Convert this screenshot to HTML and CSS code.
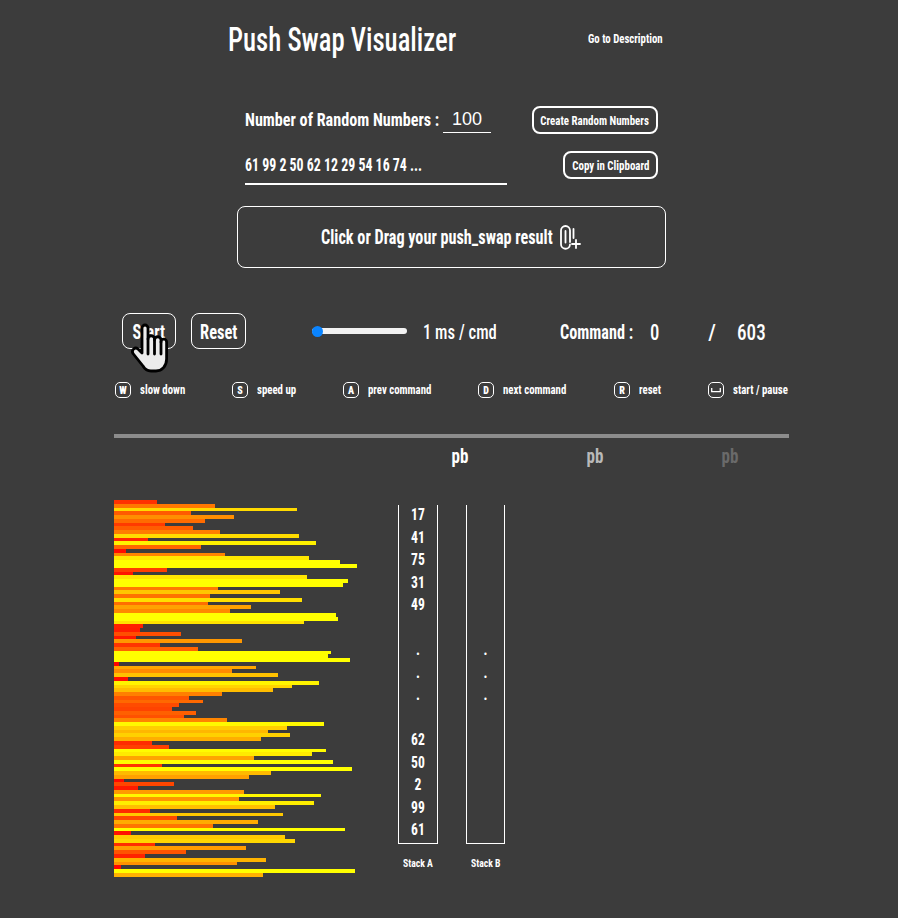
FILE: index.html
```html
<!DOCTYPE html>
<html lang="en">
<head>
    <meta charset="UTF-8">
    <meta name="viewport" content="width=device-width, initial-scale=1.0">
    <title>Push Swap Visualizer</title>
    <link rel="stylesheet" href="styles.css">
</head>
<body>
    <div class="page">
        <header class="top">
            <h1>Push Swap Visualizer</h1>
            <a class="desc-link" href="#description">Go to Description</a>
        </header>

        <section class="inputs">
            <div class="input-row">
                <label class="count-label" for="count"><span>Number of Random Numbers :</span></label>
                <input class="count-input" id="count" type="text" value="100">
                <button class="small-btn btn-create"><span>Create Random Numbers</span></button>
            </div>
            <div class="input-row row-numbers">
                <div class="numbers"><span>61 99 2 50 62 12 29 54 16 74 ...</span></div>
                <button class="small-btn btn-copy"><span>Copy in Clipboard</span></button>
            </div>
            <div class="dropzone">
                <div class="drop-text"><span>Click or Drag your push_swap result</span></div>
                <svg class="clip-icon" width="24" height="26" viewBox="0 0 24 26" fill="none" stroke="#fff" stroke-width="1.800" stroke-linecap="round" stroke-linejoin="round">
                    <path d="M7.500 7V18.500M3 6.500V20a4.500 4.500 0 0 0 9 0.500M3 6.500a4.500 4.500 0 0 1 9 0V18"/>
                    <path d="M15.500 5V14M14 20H22M18 16V24"/>
                </svg>
            </div>
        </section>

        <section class="controls">
            <button class="ctl-btn btn-start"><span>Start</span></button>
            <button class="ctl-btn btn-reset"><span>Reset</span></button>
            <input class="speed" type="range" min="1" max="100" value="1">
            <div class="speed-label"><span>1 ms / cmd</span></div>
            <div class="cmd-label"><span>Command :</span></div>
            <div class="cmd-now"><span>0</span></div>
            <div class="cmd-slash"><span>/</span></div>
            <div class="cmd-total"><span>603</span></div>
        </section>

        <section class="keys">
            <div class="key-item key-w"><span class="key-cap"><b>W</b></span><span class="key-text">slow down</span></div>
            <div class="key-item key-s"><span class="key-cap"><b>S</b></span><span class="key-text">speed up</span></div>
            <div class="key-item key-a"><span class="key-cap"><b>A</b></span><span class="key-text">prev command</span></div>
            <div class="key-item key-d"><span class="key-cap"><b>D</b></span><span class="key-text">next command</span></div>
            <div class="key-item key-r"><span class="key-cap"><b>R</b></span><span class="key-text">reset</span></div>
            <div class="key-item key-space">
                <span class="key-cap">
                    <svg width="10" height="5" viewBox="0 0 10 5" fill="none" stroke="#fff" stroke-width="1.300"><path d="M0.700 0V3.700H9.300V0"/></svg>
                </span><span class="key-text">start / pause</span>
            </div>
        </section>

        <hr class="divider">

        <section class="commands">
            <div class="cmd"><span>pb</span></div>
            <div class="cmd cmd-next"><span>pb</span></div>
            <div class="cmd cmd-later"><span>pb</span></div>
        </section>

        <section class="viz">
            <div class="bars" id="bars"></div>
            <div class="stacks">
                <div class="stack-col">
                    <div class="stack stack-a">
                        <span>17</span><span>41</span><span>75</span><span>31</span><span>49</span>
                        <span></span><span>.</span><span>.</span><span>.</span><span></span>
                        <span>62</span><span>50</span><span>2</span><span>99</span><span>61</span>
                    </div>
                    <div class="stack-name"><span>Stack A</span></div>
                </div>
                <div class="stack-col">
                    <div class="stack stack-b">
                        <span></span><span></span><span></span><span></span><span></span>
                        <span></span><span>.</span><span>.</span><span>.</span><span></span>
                    </div>
                    <div class="stack-name"><span>Stack B</span></div>
                </div>
            </div>
        </section>
    </div>

    <!-- mouse pointer sitting on the start button -->
    <svg class="hand" width="40" height="50" viewBox="0 0 40 50" fill="#ececec" stroke="#000" stroke-width="2.800" stroke-linejoin="round" stroke-linecap="round">
        <path d="M13 30V5a3 3 0 0 1 6 0V16a3.250 3.250 0 0 1 6.500 0V17a3.250 3.250 0 0 1 6.500 0V19a2.800 2.800 0 0 1 5.600 0V36C37.600 43 33 48 27 48H22C18.500 48 16 46.500 14 43L4 30.500C2 27 6 23.500 9 26Z"/>
        <path d="M19 16V31M25.500 17V31M32 19V31" fill="none"/>
    </svg>

    <script src="script.js"></script>
</body>
</html>
```

FILE: styles.css
```css
body {
    font-family: "Liberation Sans Narrow", "Roboto Condensed", "DejaVu Sans Condensed", sans-serif;
    background-color: #3c3c3c;
    color: #fff;
    margin: 0;
    padding: 0;
    height: 918px;
    overflow: hidden;
    position: relative;
}
.page {
    width: 675px;
    margin-left: 114px;
}
button {
    font-family: inherit;
    color: #fff;
    background: none;
    cursor: pointer;
    padding: 0;
}
/* no narrow enough font here, so text is squeezed sideways per element */
span, h1, .desc-link {
    white-space: nowrap;
}
.count-label span, .numbers span, .drop-text span, .speed-label span,
.cmd-label span, .cmd-now span, .cmd-slash span, .cmd-total span, .key-text {
    display: inline-block;
    transform-origin: left center;
}

/* header */
.top {
    display: flex;
    align-items: center;
    height: 78px;
    padding-left: 114px;
}
h1 {
    margin: 0;
    flex: 0 0 360px;
    font-size: 33px;
    font-weight: 500;
    transform: scaleX(0.81);
    transform-origin: left center;
}
.desc-link {
    color: #fff;
    font-size: 13px;
    font-weight: 700;
    text-decoration: none;
    transform: scaleX(0.83) translateY(-1px);
    transform-origin: left center;
}

/* random numbers */
.inputs {
    padding-left: 123px;
    width: 429px;
}
.input-row {
    display: flex;
    align-items: center;
    height: 28px;
    margin-top: 28px;
    padding-left: 8px;
    width: 413px;
    font-size: 19px;
    font-weight: 700;
}
.count-label {
    flex: 0 0 195px;
    min-width: 0;
    margin-bottom: 2px;
}
.count-label span {
    transform: scaleX(0.85);
}
.count-input {
    width: 48px;
    height: 26px;
    margin-left: 3px;
    padding: 0 0 0 9px;
    box-sizing: border-box;
    background: none;
    border: none;
    border-bottom: 1px solid #fff;
    color: #fff;
    font-family: "Liberation Sans", sans-serif;
    font-size: 18px;
}
.small-btn {
    display: flex;
    align-items: center;
    justify-content: center;
    height: 28px;
    margin-left: auto;
    box-sizing: border-box;
    border: 2px solid #fff;
    border-radius: 8px;
    font-size: 13px;
    font-weight: 700;
}
.small-btn span {
    flex: none;
    transform: scaleX(0.84);
}
.btn-create {
    width: 126px;
}
.btn-copy {
    width: 95px;
}
.row-numbers {
    margin-top: 17px;
}
.numbers {
    width: 262px;
    height: 34px;
    line-height: 27px;
    margin-top: 5px;
    box-sizing: border-box;
    border-bottom: 2px solid #fff;
    font-size: 18px;
}
.numbers span {
    transform: scaleX(0.77);
}
.dropzone {
    display: flex;
    align-items: center;
    justify-content: center;
    gap: 5px;
    height: 62px;
    margin-top: 27px;
    box-sizing: border-box;
    border: 1px solid #fff;
    border-radius: 8px;
    font-size: 20px;
    font-weight: 700;
}
.drop-text {
    flex: 0 0 232px;
    min-width: 0;
}
.drop-text span {
    transform: scaleX(0.81);
}

/* player controls */
.controls {
    display: flex;
    align-items: center;
    height: 36px;
    margin-top: 45px;
    padding-left: 8px;
    font-size: 20px;
}
.ctl-btn {
    display: flex;
    align-items: center;
    justify-content: center;
    height: 36px;
    padding-top: 2px;
    box-sizing: border-box;
    border: 1px solid #fff;
    border-radius: 8px;
    font-size: 20px;
    font-weight: 700;
}
.ctl-btn span {
    flex: none;
    transform: scaleX(0.82);
}
.btn-start {
    width: 54px;
}
.btn-reset {
    width: 55px;
    margin-left: 15px;
}
.speed {
    -webkit-appearance: none;
    appearance: none;
    width: 95px;
    height: 6px;
    margin: 0 0 0 66px;
    background: #f2f2f2;
    border-radius: 3px;
}
.speed::-webkit-slider-thumb {
    -webkit-appearance: none;
    width: 11px;
    height: 11px;
    border-radius: 50%;
    background: #0a84ff;
}
.speed-label {
    margin: 2px 0 0 16px;
    flex: 0 0 137px;
    font-weight: 500;
}
.speed-label span {
    transform: scaleX(0.83);
}
.cmd-label {
    flex: 0 0 90px;
    margin-top: 2px;
    font-weight: 700;
}
.cmd-label span {
    transform: scaleX(0.81);
}
.cmd-now {
    flex: 0 0 58px;
    margin-top: 2px;
    font-size: 22px;
    font-weight: 500;
}
.cmd-now span {
    transform: scaleX(0.85);
}
.cmd-slash {
    flex: 0 0 29px;
    margin-top: 2px;
    font-size: 22px;
    font-weight: 500;
}
.cmd-total {
    margin-top: 2px;
    font-size: 22px;
    font-weight: 500;
}
.cmd-total span {
    transform: scaleX(0.87);
}

/* keyboard hints */
.keys {
    display: flex;
    height: 18px;
    margin-top: 32px;
    padding-left: 1px;
}
.key-item {
    display: flex;
    align-items: center;
    font-size: 12px;
    font-weight: 700;
}
.key-cap {
    display: flex;
    align-items: center;
    justify-content: center;
    flex: none;
    width: 16px;
    height: 16px;
    margin-right: 9px;
    box-sizing: border-box;
    border: 1.500px solid #fff;
    border-radius: 5px;
    font-size: 10px;
}
.key-text {
    transform: scaleX(0.9);
}
.key-w { flex: 0 0 117px; }
.key-s { flex: 0 0 111px; }
.key-a { flex: 0 0 135px; }
.key-d { flex: 0 0 136px; }
.key-r { flex: 0 0 94px; }

.divider {
    height: 4px;
    margin: 35px 0 0;
    border: none;
    background: #8c8c8c;
}

/* upcoming commands */
.commands {
    display: flex;
    height: 36px;
    padding-left: 278px;
    align-items: center;
    font-size: 20px;
    font-weight: 700;
}
.cmd {
    flex: 0 0 135px;
    text-align: center;
}
.cmd span {
    display: inline-block;
    transform: scaleX(0.85);
}
.cmd-next { color: #b9b9b9; }
.cmd-later { color: #6a6a6a; }

/* bars and stacks */
.viz {
    display: flex;
    margin-top: 26px;
}
.bars {
    width: 284px;
    height: 376px;
    display: flex;
    flex-direction: column;
}
.bar {
    flex: 1;
}
.stacks {
    display: flex;
    gap: 28px;
    padding-top: 5px;
}
.stack-col {
    width: 40px;
}
.stack {
    display: grid;
    grid-auto-rows: 22.500px;
    height: 339px;
    box-sizing: border-box;
    border: 1px solid #fff;
    border-top: none;
    font-size: 16px;
    font-weight: 700;
    text-align: center;
    align-content: start;
}
.stack span {
    line-height: 20.500px;
    transform: scaleX(0.85);
}
.stack-a {
    width: 40px;
}
.stack-b {
    width: 39px;
}
.stack-name {
    display: flex;
    justify-content: center;
    margin-top: 13px;
    font-size: 11px;
    font-weight: 700;
}
.stack-name span {
    flex: none;
    transform: scaleX(0.88);
}

/* pointer */
.hand {
    position: absolute;
    left: 129px;
    top: 323px;
}
```

FILE: script.js
```javascript
// stack a from top to bottom, 1 to 100 shuffled
const values = [
    17, 41, 75, 31, 49, 37, 20, 32, 43, 76,
    13, 83, 35, 4, 45, 80, 93, 100, 21, 7,
    79, 96, 94, 42, 68, 39, 77, 38, 56, 47,
    91, 92, 78, 11, 10, 27, 8, 52, 18, 34,
    89, 88, 97, 1, 58, 48, 67, 5, 84, 73,
    65, 44, 30, 36, 26, 23, 33, 28, 46, 86,
    71, 63, 72, 60, 15, 22, 87, 81, 57, 90,
    19, 98, 64, 55, 3, 24, 9, 53, 85, 51,
    82, 66, 14, 69, 25, 59, 40, 95, 6, 70,
    74, 16, 54, 29, 12, 62, 50, 2, 99, 61
];

const bars = document.getElementById('bars');
values.forEach(function (value) {
    const bar = document.createElement('div');
    bar.className = 'bar';
    bar.style.width = (value * 2.41 + 2.3) + 'px';
    bar.style.backgroundColor = 'rgb(255, ' + Math.min(255, Math.round(value * 2.9)) + ', 0)';
    bars.appendChild(bar);
});
```
